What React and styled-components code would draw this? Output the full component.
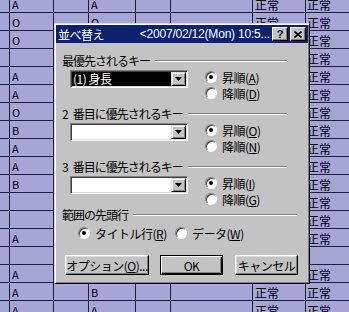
import React from "react";
import styled, { createGlobalStyle } from "styled-components";

const GlobalStyle = createGlobalStyle`
  html, body {
    margin: 0;
    padding: 0;
  }
  body {
    width: 349px;
    height: 312px;
    overflow: hidden;
    background: #a6a6d6;
    font-family: "Noto Sans CJK JP", "Liberation Sans", sans-serif;
  }
`;

const Screen = styled.div`
  position: relative;
  width: 349px;
  height: 312px;
  overflow: hidden;
`;

const Sheet = styled.div`
  display: grid;
  grid-template-columns: 10px 44px 35px 47px 35px 82px 53px 60px;
  grid-auto-rows: 18px;
  margin-top: -5px;
  background: #a6a6d6;
`;

const Cell = styled.div`
  box-sizing: border-box;
  border-right: 1px solid #1c1c3c;
  border-bottom: 1px solid #1c1c3c;
  padding-left: ${p => p.$pad}px;
  padding-top: 2px;
  font-size: ${p => (p.$kanji ? 12 : 11)}px;
  line-height: 15px;
  color: #000;
  white-space: nowrap;
  overflow: hidden;
`;

const Dialog = styled.div`
  position: absolute;
  left: 54px;
  top: 23px;
  width: 256px;
  height: 261px;
  box-sizing: border-box;
  background: #c3c3c3;
  border: 1px solid;
  border-color: #dcdcdc #000 #000 #dcdcdc;
  box-shadow: inset 1px 1px #fff, inset -1px -1px #808080;
  padding: 1px;
  display: flex;
  flex-direction: column;
`;

const TitleBar = styled.div`
  height: 18px;
  flex: none;
  display: flex;
  align-items: center;
  padding: 0 2px 0 2px;
  background: #0c226c;
  color: #fff;
  font-size: 12px;
  white-space: nowrap;
`;

const TitleText = styled.span`
  letter-spacing: -0.5px;
`;

const TitleInfo = styled.span`
  flex: 1;
  min-width: 0;
  overflow: hidden;
  text-align: right;
  padding-right: 2px;
  font-family: "Liberation Sans", sans-serif;
  font-size: 12px;
  letter-spacing: -0.2px;
`;

const TitleButton = styled.div`
  width: 16px;
  height: 14px;
  box-sizing: border-box;
  margin-left: ${p => p.$gap || 0}px;
  background: #c3c3c3;
  border: 1px solid;
  border-color: #fff #000 #000 #fff;
  box-shadow: inset -1px -1px #808080;
  display: flex;
  align-items: center;
  justify-content: center;
  color: #000;
  font-family: "Liberation Sans", sans-serif;
  font-weight: bold;
  font-size: 11px;
  line-height: 12px;
`;

const Body = styled.div`
  display: flex;
  flex-direction: column;
  padding: 11px 0 0 6px;
  font-size: 12px;
  color: #000;
`;

const SectionLabel = styled.div`
  display: flex;
  align-items: center;
  height: 13px;
  margin-top: ${p => p.$top || 0}px;
  letter-spacing: -1px;
  white-space: nowrap;
`;

const Ordinal = styled.span`
  margin-right: 5px;
`;

const Rule = styled.div`
  flex: 1;
  height: 0;
  margin-left: 5px;
  margin-right: ${p => p.$right}px;
  border-top: 1px solid #808080;
  border-bottom: 1px solid #fff;
`;

const KeyRow = styled.div`
  display: flex;
  height: 32px;
  margin-top: 2px;
  margin-bottom: 6px;
`;

const Combo = styled.div`
  width: 118px;
  height: 18px;
  margin-left: 8px;
  margin-top: 1px;
  box-sizing: border-box;
  border: 1px solid;
  border-color: #808080 #fff #fff #808080;
  box-shadow: inset 1px 1px #404040, inset -1px -1px #dcdcdc;
  background: ${p => (p.$active ? "#000" : "#fff")};
  display: flex;
  align-items: center;
  padding: 1px 1px 1px 2px;
`;

const ComboText = styled.span`
  flex: 1;
  color: #fff;
  font-size: 12px;
  line-height: 14px;
  letter-spacing: -0.5px;
  white-space: pre;
`;

const DropButton = styled.div`
  width: 15px;
  height: 14px;
  box-sizing: border-box;
  background: #c3c3c3;
  border: 1px solid;
  border-color: #dcdcdc #000 #000 #dcdcdc;
  box-shadow: inset 1px 1px #fff, inset -1px -1px #808080;
  display: flex;
  align-items: center;
  justify-content: center;
`;

const RadioGroup = styled.div`
  display: flex;
  flex-direction: column;
  margin-left: 17px;
`;

const RadioLabel = styled.label`
  display: flex;
  flex: none;
  align-items: center;
  height: 16px;
  width: ${p => (p.$width ? `${p.$width}px` : "auto")};
  letter-spacing: -0.5px;
  white-space: nowrap;
`;

const RadioDot = styled.span`
  position: relative;
  width: 12px;
  height: 12px;
  flex: none;
  margin-right: 5px;
  box-sizing: border-box;
  border-radius: 50%;
  background: #fff;
  border: 1px solid;
  border-color: #808080 #fff #fff #808080;
  box-shadow: inset 1px 1px #404040;

  &::after {
    content: "";
    display: ${p => (p.$checked ? "block" : "none")};
    position: absolute;
    left: 3px;
    top: 3px;
    width: 4px;
    height: 4px;
    border-radius: 50%;
    background: #000;
  }
`;

const Key = styled.span`
  text-decoration: underline;
  text-underline-offset: 1px;
`;

const RangeRow = styled.div`
  display: flex;
  margin-top: 4px;
  padding-left: 16px;
`;

const ButtonRow = styled.div`
  display: flex;
  margin-top: 14px;
  padding-left: 3px;
`;

const Button = styled.div`
  width: ${p => p.$width}px;
  height: 20px;
  margin-left: ${p => p.$gap || 0}px;
  box-sizing: border-box;
  background: #c3c3c3;
  border: 1px solid;
  border-color: ${p => (p.$default ? "#000" : "#fff #000 #000 #fff")};
  box-shadow: ${p =>
    p.$default
      ? "inset 1px 1px #fff, inset -1px -1px #000, inset -2px -2px #808080"
      : "inset -1px -1px #808080, inset 1px 1px #dcdcdc"};
  display: flex;
  align-items: center;
  justify-content: center;
  font-size: 12px;
  letter-spacing: -0.5px;
  white-space: nowrap;
`;

const rows = [
  ["A", "A", "正常", "正常"],
  ["O", "O", "正常", "正常"],
  ["O", "", "正常", "正常"],
  ["", "", "正常", "正常"],
  ["A", "", "", "正常"],
  ["A", "", "", "正常"],
  ["O", "", "", "正常"],
  ["B", "", "", "正常"],
  ["A", "", "", "正常"],
  ["A", "", "", "正常"],
  ["B", "", "", "正常"],
  ["", "", "", "正常"],
  ["", "", "", "正常"],
  ["A", "", "", "正常"],
  ["", "", "", ""],
  ["A", "", "", "正常"],
  ["A", "B", "正常", "正常"],
  ["A", "A", "正常", "正常"]
];

const Arrow = () => (
  <svg width="7" height="4" viewBox="0 0 7 4">
    <path d="M0 0h7L3.5 4z" fill="#000" />
  </svg>
);

const CloseGlyph = () => (
  <svg width="8" height="7" viewBox="0 0 8 7">
    <path d="M0.5 0.5L7.5 6.5M7.5 0.5L0.5 6.5" stroke="#000" strokeWidth="1.6" />
  </svg>
);

const Radio = ({ checked, label, accel, width }) => (
  <RadioLabel $width={width}>
    <RadioDot $checked={checked} />
    {label}(<Key>{accel}</Key>)
  </RadioLabel>
);

const KeyBlock = ({ ordinal, title, value, up, down }) => (
  <>
    <SectionLabel>
      {ordinal && <Ordinal>{ordinal}</Ordinal>}
      {title}
      <Rule $right={21} />
    </SectionLabel>
    <KeyRow>
      <Combo $active={!!value}>
        <ComboText>{value}</ComboText>
        <DropButton>
          <Arrow />
        </DropButton>
      </Combo>
      <RadioGroup>
        <Radio checked label="昇順" accel={up} />
        <Radio label="降順" accel={down} />
      </RadioGroup>
    </KeyRow>
  </>
);

export default function App() {
  return (
    <Screen>
      <GlobalStyle />
      <Sheet>
        {rows.map((r, i) => (
          <React.Fragment key={i}>
            <Cell />
            <Cell $pad={2}>{r[0]}</Cell>
            <Cell />
            <Cell $pad={2}>{r[1]}</Cell>
            <Cell />
            <Cell />
            <Cell $pad={2} $kanji>{r[2]}</Cell>
            <Cell $pad={1} $kanji>{r[3]}</Cell>
          </React.Fragment>
        ))}
      </Sheet>

      <Dialog>
        <TitleBar>
          <TitleText>並べ替え</TitleText>
          <TitleInfo>&lt;2007/02/12(Mon) 10:5...</TitleInfo>
          <TitleButton>?</TitleButton>
          <TitleButton $gap={2}>
            <CloseGlyph />
          </TitleButton>
        </TitleBar>
        <Body>
          <KeyBlock title="最優先されるキー" value="(1) 身長" up="A" down="D" />
          <KeyBlock ordinal="2" title="番目に優先されるキー" up="O" down="N" />
          <KeyBlock ordinal="3" title="番目に優先されるキー" up="I" down="G" />
          <SectionLabel $top={-5}>
            範囲の先頭行
            <Rule $right={11} />
          </SectionLabel>
          <RangeRow>
            <Radio checked label="タイトル行" accel="R" width={97} />
            <Radio label="データ" accel="W" />
          </RangeRow>
          <ButtonRow>
            <Button $width={84}>
              オプション(<Key>O</Key>)...
            </Button>
            <Button $width={63} $gap={11} $default>
              OK
            </Button>
            <Button $width={63} $gap={12}>
              キャンセル
            </Button>
          </ButtonRow>
        </Body>
      </Dialog>
    </Screen>
  );
}
